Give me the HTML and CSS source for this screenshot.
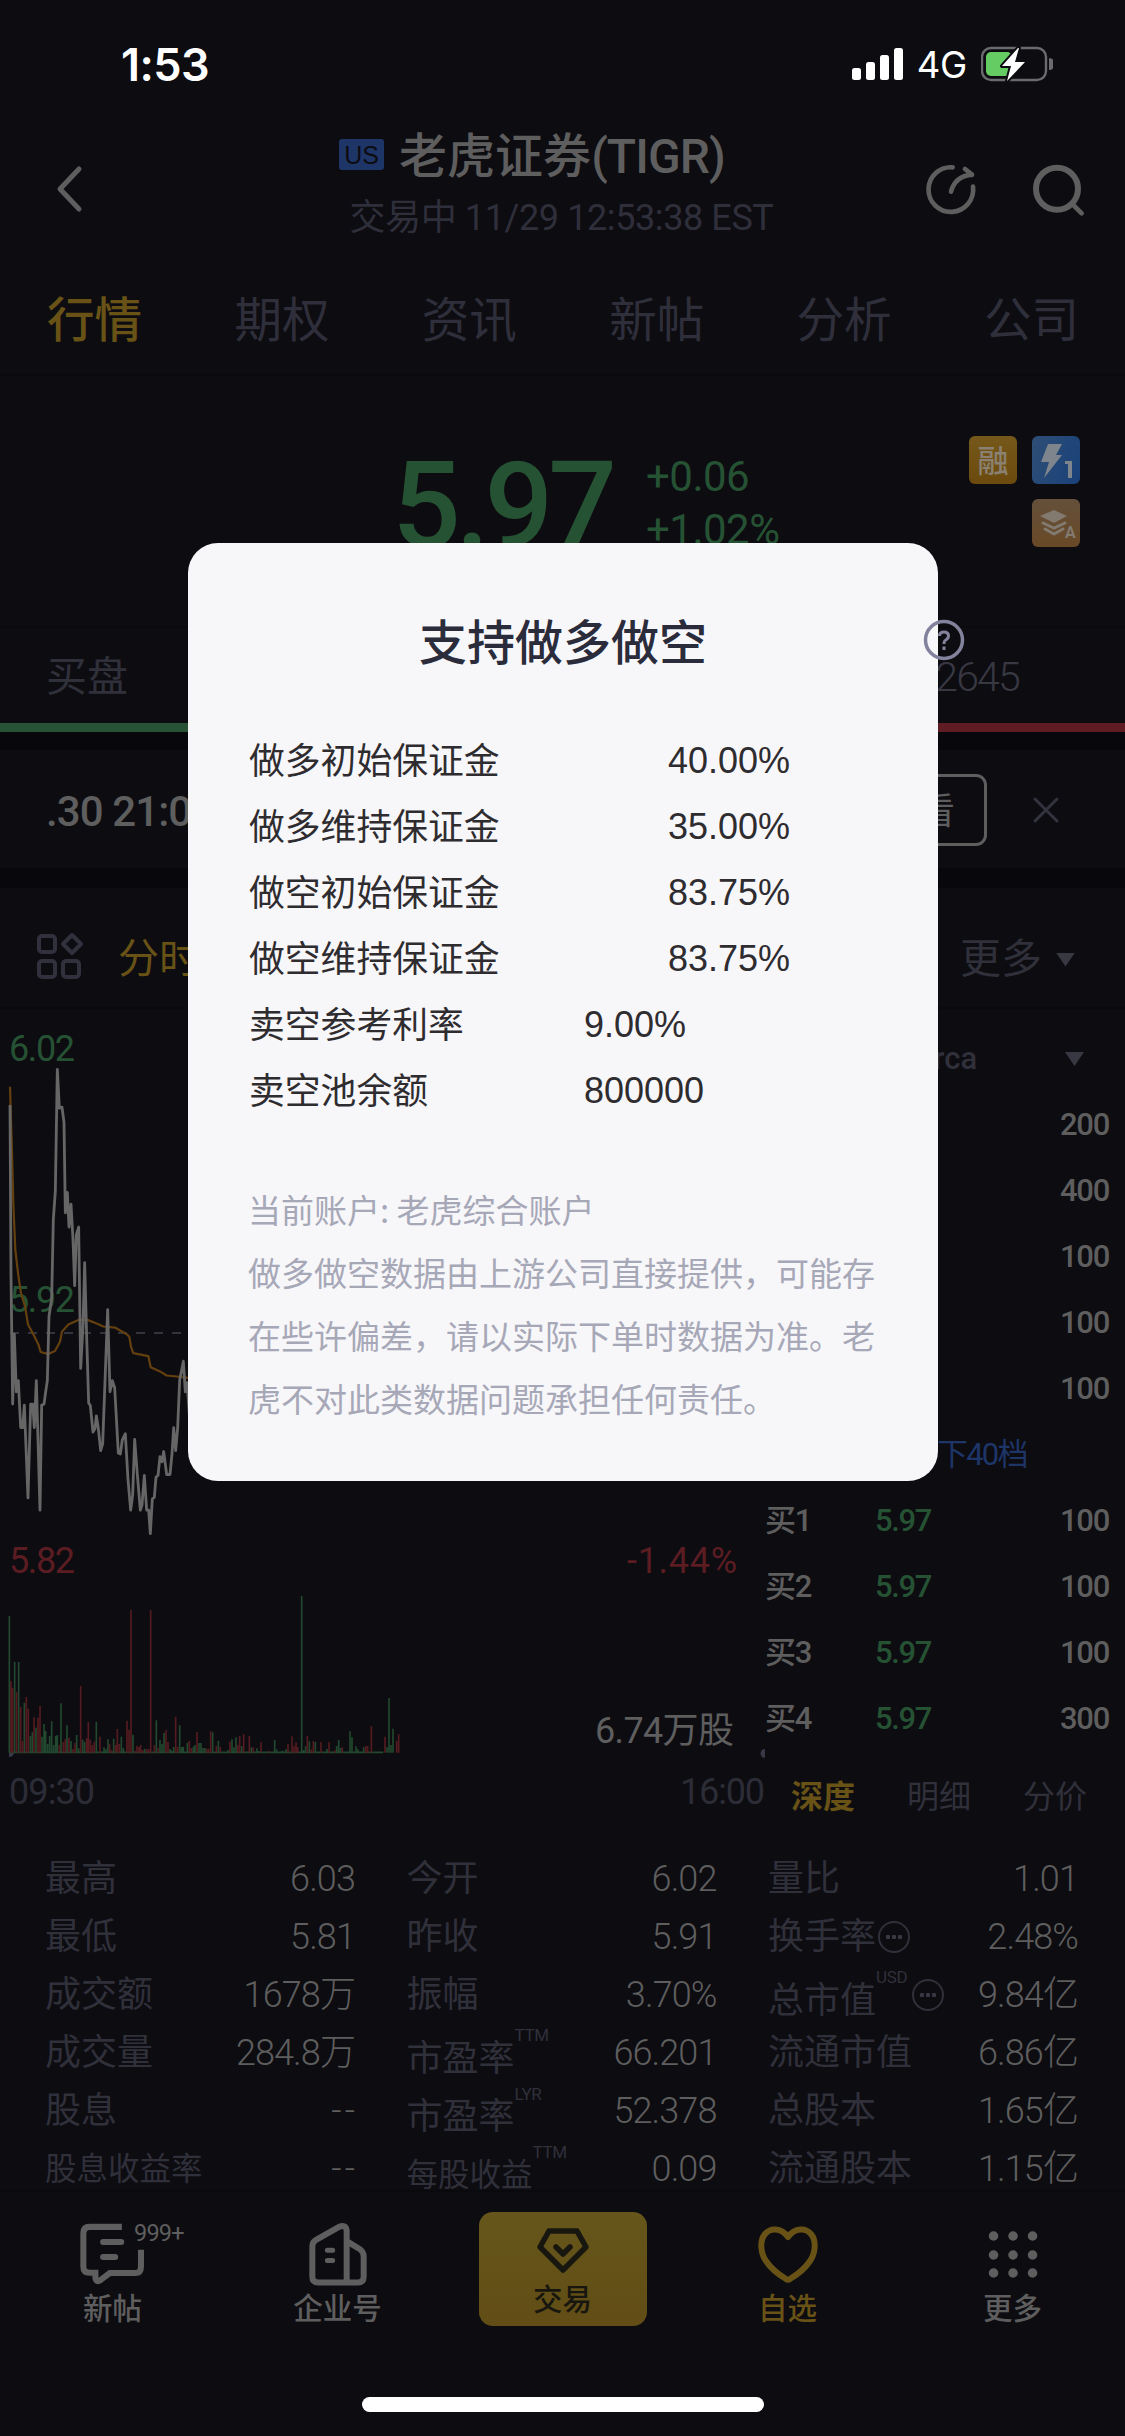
FILE: index.html
```html
<!DOCTYPE html>
<html lang="zh-CN">
<head>
<meta charset="utf-8">
<title>老虎证券(TIGR)</title>
<link rel="stylesheet" href="styles.css">
</head>
<body>
<div class="screen">
  <div class="statusbar">
    <span class="clock">1:53</span>
    <div class="signals">
      <svg width="52" height="34" viewBox="0 0 52 34" fill="#fff"><rect x="0" y="21" width="9" height="12" rx="2.5"/><rect x="14" y="15" width="9" height="18" rx="2.5"/><rect x="28" y="8" width="9" height="25" rx="2.5"/><rect x="42" y="1" width="9" height="32" rx="2.5"/></svg>
      <span class="net">4G</span>
      <svg width="72" height="38" viewBox="0 0 72 38"><rect x="1" y="3" width="64" height="32" rx="9" fill="none" stroke="#6b6b6f" stroke-width="2.4"/><rect x="5" y="7" width="26" height="24" rx="5" fill="#65cc64"/><path d="M68 13a6 6 0 0 1 0 12z" fill="#6b6b6f"/><path d="M37 3L21 21H30L26 36L44 17H34L38 3Z" fill="#fff" stroke="#0d0c11" stroke-width="4" stroke-linejoin="round" paint-order="stroke"/></svg>
    </div>
  </div>

  <header class="header">
    <svg class="back" width="30" height="48" viewBox="0 0 30 48"><path d="M26 4L7 24L26 44" fill="none" stroke="#5e5e5e" stroke-width="5" stroke-linecap="round" stroke-linejoin="round"/></svg>
    <div class="titles">
      <div class="title"><span class="market">US</span><span>老虎证券<i>(TIGR)</i></span></div>
      <div class="subtitle">交易中 11/29 12:53:38 EST</div>
    </div>
    <svg class="tools" width="162" height="54" viewBox="300 430 486 162" fill="none" stroke="#5e5e5e" stroke-width="14" stroke-linecap="round" stroke-linejoin="round"><path d="M383 443A67 67 0 1 0 444 501M378 516Q390 470 441 465M420 448L441 465"/><circle cx="696" cy="507" r="63" stroke-width="18"/><path d="M742 553L770 581"/></svg>
  </header>

  <nav class="tabs"><span class="on">行情</span><span>期权</span><span>资讯</span><span>新帖</span><span>分析</span><span>公司</span></nav>

  <section class="quote">
    <div class="price">5.97</div>
    <div class="change"><span>+0.06</span><span>+1.02%</span></div>
    <div class="badges">
      <span class="badge margin">融</span>
      <svg class="badge flash" viewBox="0 0 48 48" fill="#7f858c"><path d="M16 8H30L24 19H30L12 42L17 26H9Z"/><path d="M33 25H40V42H36V28H33Z"/></svg>
      <svg class="badge layers" viewBox="0 0 48 48"><path d="M22 11L35 17L22 24L8 17Z" fill="#82796f"/><path d="M11 24L22 29L33 24M13 30L22 35L31 30" fill="none" stroke="#82796f" stroke-width="3" stroke-linecap="round"/><text x="33" y="39" font-size="16" font-weight="700" fill="#82796f">A</text></svg>
    </div>
  </section>

  <section class="depth"><span>买盘</span><span class="asks">2645</span></section>
  <div class="ratio"></div>

  <section class="notice">
    <b>.30 21:00</b>
    <div class="notice-end"><span class="look">查看</span>
    <svg width="28" height="28" viewBox="0 0 28 28"><path d="M3 3L25 25M25 3L3 25" stroke="#33333f" stroke-width="3" stroke-linecap="round"/></svg></div>
  </section>

  <section class="periods">
    <svg width="47" height="48" viewBox="0 0 47 48" fill="none" stroke="#31313d" stroke-width="4"><rect x="2" y="4" width="16" height="16" rx="3"/><rect x="2" y="29" width="16" height="16" rx="3"/><rect x="26" y="29" width="16" height="16" rx="3"/><path d="M35 3L44 12L35 21L26 12Z" stroke-linejoin="round"/></svg>
    <span class="on">分时</span>
    <span class="more">更多<i class="caret"></i></span>
  </section>

  <section class="market-area">
    <svg class="chart" width="765" height="839" viewBox="0 1009 765 839">
      <g font-size="36">
        <text x="9" y="1061" class="up" textLength="66">6.02</text>
        <text x="9" y="1312" class="up" textLength="66">5.92</text>
        <text x="9" y="1573" class="down" textLength="66">5.82</text>
        <text x="627" y="1573" class="down" textLength="110">-1.44%</text>
        <text x="595" y="1743" class="lit" textLength="139">6.74万股</text>
        <text x="9" y="1804" class="dim" textLength="86">09:30</text>
        <text x="680" y="1804" class="dim" textLength="85">16:00</text>
      </g>
      <path d="M10 1333H756" stroke="#33333d" stroke-width="2" stroke-dasharray="9 9"/>
      <g transform="translate(0 1000) scale(.33333 .5102)" fill="none" stroke-linejoin="round">
        <path vector-effect="non-scaling-stroke" stroke="#64400f" stroke-width="2.2" d="M30 170L36 300 40 400 46 490 55 540 63 575 75 600 84 636 100 655 115 675 122 690 145 694 165 688 180 670 186 650 205 636 235 627 262 627 290 634 310 640 345 642 380 655 388 660 393 680 400 692 445 698 452 720 480 728 500 736 530 738 570 741"/>
        <path vector-effect="non-scaling-stroke" stroke="#666" stroke-width="2.8" d="M30 206L33 540 38 792 43 655 49 768 55 746 62 838 68 838 73 794 84 976 92 792 98 792 103 838 109 746 120 1000 125 794 132 792 137 768 142 746 147 620 155 585 160 430 166 375 172 136 178 212 186 210 192 240 196 417 202 377 207 445 213 400 219 470 224 560 229 460 236 445 242 722 249 640 254 515 260 660 266 790 271 795 279 847 285 840 289 815 295 840 302 883 308 870 323 607 330 768 337 746 344 760 355 888 361 890 367 862 376 850 384 940 392 1000 398 970 404 861 412 930 421 1000 426 990 433 932 440 1000 446 1000 451 1046 457 978 463 975 468 935 474 932 480 895 486 905 491 885 500 930 510 930 516 890 521 838 527 883 533 838 539 745 545 725 550 708 556 768 561 750 570 830"/>
      </g>
      <g transform="translate(0 1540) scale(.33333)" fill="none" stroke-width="5">
        <path stroke="#22482f" d="M28 228V638M44 366V638M56 366V638M73 488V638M91 588V638M97 577V638M108 563V638M126 590V638M132 552V638M137 573V638M143 612V638M149 588V638M155 544V638M161 615V638M167 588V638M172 585V638M183 490V638M201 556V638M213 603V638M230 585V638M236 625V638M248 599V638M254 606V638M289 545V638M312 622V638M318 627V638M324 598V638M341 596V638M364 590V638M370 624V638M399 584V638M434 626V638M469 541V638M480 600V638M486 612V638M492 579V638M510 627V638M515 632V638M521 621V638M539 556V638M545 621V638M550 621V638M562 609V638M580 620V638M585 615V638M597 609V638M603 609V638M609 624V638M615 624V638M638 577V638M655 602V638M684 630V638M696 598V638M702 622V638M708 592V638M725 618V638M754 622V638M771 625V638M777 633V638M788 635V638M824 600V638M830 628V638M847 632V638M858 628V638M905 168V638M911 630V638M917 619V638M928 604V638M946 606V638M981 627V638M1010 618V638M1016 600V638M1022 624V638M1050 574V638M1056 592V638M1068 619V638M1074 628V638M1091 622V638M1161 622V638M1167 474V638M1173 615V638M1179 566V638M27 637H1150"/>
        <path stroke="#541b20" d="M33 424V638M38 444V638M50 456V638M62 501V638M68 603V638M79 471V638M85 506V638M102 532V638M114 533V638M120 497V638M178 615V638M190 606V638M196 598V638M207 593V638M219 627V638M225 609V638M242 437V638M260 595V638M265 546V638M271 599V638M277 615V638M283 605V638M300 590V638M329 612V638M335 630V638M347 615V638M352 567V638M358 612V638M381 542V638M387 569V638M393 209V638M405 632V638M411 618V638M417 621V638M422 615V638M428 630V638M440 627V638M446 627V638M452 210V638M463 615V638M475 624V638M498 570V638M504 606V638M527 530V638M533 620V638M568 603V638M574 624V638M591 576V638M620 626V638M626 626V638M632 574V638M649 617V638M661 621V638M690 605V638M713 615V638M719 588V638M731 582V638M748 588V638M760 622V638M783 607V638M807 632V638M864 612V638M876 589V638M882 619V638M888 607V638M893 622V638M922 587V638M934 628V638M940 603V638M963 606V638M987 607V638M1004 630V638M1027 622V638M1097 618V638M1103 617V638M1114 559V638M1155 590V638M1190 603V638M1196 583V638"/>
      </g>
      <path d="M9 1753h5a5 5 0 0 1-5 4zM765 1749a4 4 0 0 0 0 9z" fill="#383846"/>
    </svg>
    <div class="book">
      <div class="row venue"><span>Arca</span><i class="caret"></i></div>
      <div class="row ask">200</div>
      <div class="row ask">400</div>
      <div class="row ask">100</div>
      <div class="row ask">100</div>
      <div class="row ask">100</div>
      <div class="row levels">下40档</div>
      <div class="row"><span>买1</span><span class="up">5.97</span><span>100</span></div>
      <div class="row"><span>买2</span><span class="up">5.97</span><span>100</span></div>
      <div class="row"><span>买3</span><span class="up">5.97</span><span>100</span></div>
      <div class="row"><span>买4</span><span class="up">5.97</span><span>300</span></div>
      <div class="booktabs"><b>深度</b><span>明细</span><span>分价</span></div>
    </div>
  </section>

  <section class="stats">
    <div><span>最高</span><em>6.03</em></div><div><span>今开</span><em>6.02</em></div><div><span>量比</span><em>1.01</em></div>
    <div><span>最低</span><em>5.81</em></div><div><span>昨收</span><em>5.91</em></div><div><span>换手率</span><i class="dots"></i><em>2.48%</em></div>
    <div><span>成交额</span><em>1678万</em></div><div><span>振幅</span><em>3.70%</em></div><div><span class="low">总市值</span><small>USD</small><i class="dots gap"></i><em>9.84亿</em></div>
    <div><span>成交量</span><em>284.8万</em></div><div><span class="low">市盈率</span><small>TTM</small><em>66.201</em></div><div><span>流通市值</span><em>6.86亿</em></div>
    <div><span>股息</span><em class="none">--</em></div><div><span class="low">市盈率</span><small>LYR</small><em>52.378</em></div><div><span>总股本</span><em>1.65亿</em></div>
    <div><span class="narrow">股息收益率</span><em class="none">--</em></div><div><span class="low narrow">每股收益</span><small>TTM</small><em>0.09</em></div><div><span>流通股本</span><em>1.15亿</em></div>
  </section>

  <footer class="nav">
    <div class="item chat">
      <svg width="67" height="64" viewBox="60 95 200 190" fill="none" stroke="#5e5e5e" stroke-width="18"><path d="M188 109H92Q73 109 73 128V228Q73 246 92 246H109V262Q112 276 124 268L152 247H228Q245 247 245 228V177"/><path stroke-linecap="round" d="M132 154H186M132 199H168"/></svg>
      <span class="count">999+</span><span>新帖</span>
    </div>
    <div class="item">
      <svg width="60" height="65" viewBox="745 98 180 194" fill="none" stroke="#5e5e5e" stroke-width="18" stroke-linejoin="round"><path d="M861 278V124Q859 104 838 112L768 152Q758 158 758 170V262Q758 279 776 279H895Q912 279 912 262V200Q912 188 902 180L866 158"/><path stroke-width="15" stroke-linecap="round" d="M803 182H819M803 213H819"/></svg>
      <span>企业号</span>
    </div>
    <div class="item"><div class="trade">
      <svg width="54" height="50" viewBox="0 0 54 50" fill="none" stroke="#18170f" stroke-width="5.5" stroke-linecap="round" stroke-linejoin="round"><path d="M13 6H41L50 22L27 45L4 22Z"/><path d="M20 22L27 29L34 22"/></svg>
      <span>交易</span>
    </div></div>
    <div class="item fav">
      <svg width="62" height="64" viewBox="0 0 62 64"><path d="M31 15C24 5 13 6 8 12C2 19 4 32 9 39C15 48 24 54 29 57Q31 58.500 33 57C38 54 47 48 53 39C58 32 60 19 54 12C49 6 38 5 31 15Z" fill="none" stroke="#685216" stroke-width="6" stroke-linejoin="round"/></svg>
      <span>自选</span>
    </div>
    <div class="item">
      <svg width="50" height="64" viewBox="0 0 50 64" stroke="#5e5e5e" stroke-width="9.500" stroke-linecap="round"><path d="M5.500 14h.1M25 14h.1M44.500 14h.1M5.500 33h.1M25 33h.1M44.500 33h.1M5.500 51h.1M25 51h.1M44.500 51h.1"/></svg>
      <span>更多</span>
    </div>
  </footer>
  <div class="home"></div>

  <div class="dialog">
    <h1>支持做多做空</h1>
    <svg class="help" width="42" height="42" viewBox="0 0 42 42" fill="none" stroke="#82829c"><circle cx="21" cy="21" r="18.500" stroke-width="3.500"/><path d="M16.500 17Q16.500 13 21 13Q25.500 13 25.500 17Q25.500 19.500 22.500 21.200Q21 22 21 25" stroke-width="3"/><path d="M21 27.500V31" stroke-width="3"/></svg>
    <dl>
      <div><dt>做多初始保证金</dt><dd>40.00%</dd></div>
      <div><dt>做多维持保证金</dt><dd>35.00%</dd></div>
      <div><dt>做空初始保证金</dt><dd>83.75%</dd></div>
      <div><dt>做空维持保证金</dt><dd>83.75%</dd></div>
      <div class="short"><dt>卖空参考利率</dt><dd>9.00%</dd></div>
      <div class="short"><dt>卖空池余额</dt><dd>800000</dd></div>
    </dl>
    <p>当前账户: 老虎综合账户<br>做多做空数据由上游公司直接提供，可能存在些许偏差，请以实际下单时数据为准。老虎不对此类数据问题承担任何责任。</p>
  </div>
</div>
</body>
</html>
```
FILE: styles.css
```css
* { box-sizing: border-box; }
body { margin: 0; background: #0d0c11; }
svg { display: block; flex: none; }
i, em { font-style: normal; }
.screen {
  position: relative; width: 1125px; height: 2436px; overflow: hidden;
  display: flex; flex-direction: column;
  background: #0d0c11; color: #5e5e5e;
  font-family: Roboto, "Noto Sans CJK SC", sans-serif; font-size: 36px; line-height: 1.2;
  white-space: nowrap;
}
.screen > * { flex: none; }
.up { color: #265234; fill: #265234; }
.down { fill: #5b1c22; }
.lit { fill: #5e5e5e; }
.dim { fill: #2c2c36; }

.statusbar { height: 130px; padding: 0 72px 2px 121px; display: flex; align-items: center; justify-content: space-between; color: #fff; }
.clock { font: 600 45px/1 Inter, sans-serif; letter-spacing: -.6px; }
.signals { display: flex; align-items: center; padding-bottom: 0; }
.net { font: 36.5px/1 Inter, sans-serif; margin: 2px 14px 0 13px; letter-spacing: -.3px; }

.header { height: 140px; padding: 0 38px 0 53px; display: flex; align-items: center; justify-content: space-between; }
.back { margin-top: -22px; }
.tools { margin-top: -20px; }
.titles { width: 600px; margin-left: 115px; margin-top: -27px; display: flex; flex-direction: column; align-items: center; }
.title { display: flex; align-items: center; gap: 15px; font-size: 48px; font-weight: 500; line-height: 62px; margin-right: 59px; }
.title i { letter-spacing: -.9px; }
.market { width: 45px; height: 31px; border-radius: 3px; background: #1e3568; color: #0d0c11; font: 25px/32px "Liberation Sans", sans-serif; text-align: center; margin-top: -4px; }
.subtitle { color: #2f2f3b; line-height: 60px; letter-spacing: -.4px; }

.tabs { height: 106px; padding: 0 46px 2px 47px; display: flex; justify-content: space-between; align-items: center; font-size: 47.5px; color: #2f2f3b; border-bottom: 2px solid #0a090d; }
.on, .fav { color: #685216; }
.tabs .on { font-weight: 500; }

.quote { height: 252px; padding: 60px 45px 0 392px; display: flex; border-bottom: 2px solid #0a090d; color: #265234; }
.price { font-size: 121px; font-weight: 500; line-height: 141px; letter-spacing: -5px; width: 254px; }
.change { display: flex; flex-direction: column; font-size: 42px; line-height: 53px; padding-top: 14px; letter-spacing: -.5px; }
.badges { margin-left: auto; width: 111px; display: flex; flex-wrap: wrap; justify-content: flex-end; align-content: flex-start; gap: 15px; }
.badge { width: 48px; height: 48px; border-radius: 6px; }
.margin { background: linear-gradient(#75581a, #6c4a0e); color: #8b8172; font: 500 31px/46px "Noto Sans CJK SC", sans-serif; text-align: center; }
.flash { background: linear-gradient(110deg, #2e4e75, #19417a); }
.layers { background: linear-gradient(#65503b, #684926); }

.depth { height: 95px; padding: 5px 106px 0 46px; display: flex; justify-content: space-between; align-items: center; font-size: 41px; color: #30303b; }
.asks { font-weight: 300; letter-spacing: -1.8px; color: #383843; }
.ratio { height: 9px; background: linear-gradient(90deg, #275235 50%, #5f1c22 50%); }

.notice { height: 156px; border: solid #08070b; border-width: 18px 0 20px; padding: 2px 65px 0 46px; display: flex; align-items: center; justify-content: space-between; }
.notice b { font-size: 42px; font-weight: 500; letter-spacing: -.9px; padding-top: 4px; }
.notice-end { display: flex; align-items: center; gap: 45px; }
.look { width: 148px; height: 72px; border: 3px solid #5e5e5e; border-radius: 11px; font: 36px/62px "Noto Sans CJK SC", sans-serif; text-align: right; padding-right: 29px; }

.periods { height: 121px; padding: 20px 50px 0 37px; display: flex; align-items: center; font-size: 41px; color: #30303b; border-bottom: 2px solid #0a090d; }
.periods svg { margin-top: -3px; }
.periods .on { margin-left: 34px; padding-top: 5px; }
.more { display: flex; align-items: center; margin-left: auto; gap: 14px; padding-top: 4px; }
.caret { width: 19px; height: 14px; background: #383843; clip-path: polygon(0 0, 100% 0, 50% 100%); }

.market-area { height: 839px; display: flex; }
.chart text { stroke: none; }
.book { width: 360px; padding: 17px 16px 0 0; font-size: 31px; font-weight: 500; letter-spacing: -1.3px; }
.row { height: 66px; display: grid; grid-template-columns: 110px 1fr auto; align-items: center; }
.row .up { letter-spacing: -1.4px; }
.ask { display: flex; justify-content: flex-end; }
.venue { display: flex; justify-content: space-between; padding: 0 25px 0 148px; color: #30303b; letter-spacing: 0; }
.levels { display: block; padding-left: 172px; line-height: 65px; font-size: 31px; font-weight: 400; letter-spacing: -1.8px; color: #1e3568; }
.booktabs { display: flex; justify-content: space-between; padding: 0 22px 0 26px; margin-top: 26px; font-size: 32px; font-weight: 400; letter-spacing: 0; color: #30303b; }
.booktabs b { font-weight: 700; color: #685216; }

.stats { height: 344px; padding: 2px 47px 0 45px; display: grid; grid-template-columns: repeat(3, 310px); column-gap: 51.500px; grid-auto-rows: 58.200px; color: #30303b; border-bottom: 2px solid #0a090d; }
.stats div { display: flex; align-items: center; }
.stats em { margin-left: auto; color: #5e5e5e; font-weight: 300; letter-spacing: -.9px; }
.stats .none { letter-spacing: 3px; margin-right: -3px; }
.stats .low { padding-top: 12px; }
.stats small { font-size: 17px; margin: -36px 0 0 0; letter-spacing: -.3px; }
.stats .narrow { font-size: 31.500px; }
.dots { width: 32px; height: 32px; flex: none; margin-left: 2px; border: 2px solid #30303b; border-radius: 50%; background: radial-gradient(circle, #383843 2px, transparent 2.500px) 0 50% / 6px 6px no-repeat, radial-gradient(circle, #383843 2px, transparent 2.500px) 50% 50% / 6px 6px no-repeat, radial-gradient(circle, #383843 2px, transparent 2.500px) 100% 50% / 6px 6px no-repeat; background-position: 5px 50%, 11px 50%, 17px 50%; }
.gap { margin-left: 5px; }

.nav { height: 205px; display: flex; font-size: 29.500px; font-weight: 500; line-height: 36px; }
.item { position: relative; width: 225px; padding-top: 30px; display: flex; flex-direction: column; align-items: center; }
.item > span:last-child { margin-top: auto; margin-bottom: 70px; }
.count { position: absolute; left: 134px; top: 23px; font-size: 23.5px; font-weight: 400; letter-spacing: -.8px; }
.trade { width: 168px; height: 114px; margin-top: -10px; border-radius: 14px; background: linear-gradient(#66561b, #614d15); color: #18170f; display: flex; flex-direction: column; align-items: center; padding-top: 13px; }
.trade span { margin-top: 7px; }
.home { width: 402px; height: 15px; border-radius: 8px; background: #fff; margin: 0 auto; }

.dialog { position: absolute; left: 188px; top: 543px; width: 750px; height: 938px; border-radius: 30px; background: #f7f7fa; color: #2f2c30; padding: 63px 61px 0; }
.dialog h1 { margin: 0; font: 500 48px/66px "Noto Sans CJK SC", sans-serif; color: #2b2c3b; text-align: center; }
.help { position: absolute; left: 735px; top: 76px; }
.dialog dl { margin: 54px 0 0; }
.dialog dl div { display: flex; height: 66px; align-items: center; }
.dialog dt { width: 419px; margin-top: -3px; font: 35.8px/66px "Noto Sans CJK SC", sans-serif; }
.dialog dd { margin: 4px 0 0; font: 36px/66px "Liberation Sans", sans-serif; }
.dialog .short dt { width: 335px; }
.dialog p { margin: 56px 0 0 -1px; width: 629px; font: 33px/63px "Noto Sans CJK SC", sans-serif; color: #a7a8b7; white-space: normal; }
```
